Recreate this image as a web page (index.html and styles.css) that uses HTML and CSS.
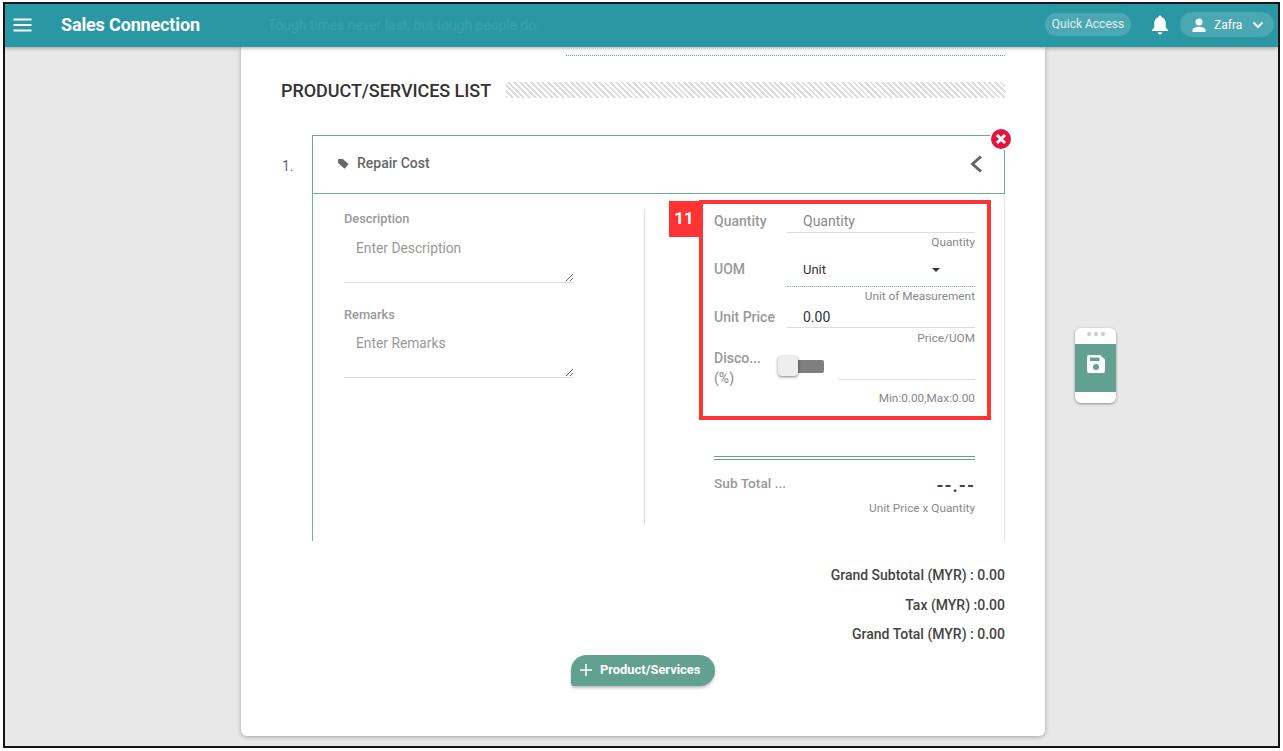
FILE: index.html
```html
<!DOCTYPE html>
<html lang="en">
<head>
  <meta charset="UTF-8">
  <title>Sales Connection</title>
  <link rel="stylesheet" href="styles.css">
</head>
<body>
  <div class="frame">
    <header class="topbar">
      <svg class="menu-icon" width="20" height="14" viewBox="0 0 20 14"><path d="M0.5 1.5h18M0.5 7h18M0.5 12.5h18" stroke="#fff" stroke-width="2"/></svg>
      <div class="brand">Sales Connection</div>
      <div class="quote">Tough times never last, but tough people do.</div>
      <div class="quick">Quick Access</div>
      <svg class="bell" width="18" height="20" viewBox="0 0 18 20"><path d="M9 0.5c-1 0-1.6.7-1.6 1.7C4.7 3 3.3 5.2 3.3 8v4.5L1 15v1h16v-1l-2.3-2.5V8c0-2.8-1.4-5-4.1-5.8C10.6 1.2 10 .5 9 .5zM6.8 17.3c0 1.2 1 2.2 2.2 2.2s2.2-1 2.2-2.2z" fill="#fff"/></svg>
      <div class="user">
        <svg width="16" height="14" viewBox="0 0 16 14"><circle cx="8" cy="4" r="3.5" fill="#fff"/><path d="M1.5 14v-2c0-2.2 4.3-3.3 6.5-3.3s6.5 1.1 6.5 3.3v2z" fill="#fff"/></svg>
        <span>Zafra</span>
        <svg width="12" height="8" viewBox="0 0 12 8"><path d="M1.5 1.5 6 6l4.5-4.5" fill="none" stroke="#fff" stroke-width="2"/></svg>
      </div>
    </header>

    <div class="content">
      <main class="card">
        <div class="top-rule"></div>
        <div class="section-title">
          <h2>PRODUCT/SERVICES LIST</h2>
          <div class="stripes"></div>
        </div>

        <div class="item">
          <div class="item-no">1.</div>
          <div class="item-main">
            <div class="item-head">
              <svg class="tag" width="11" height="10" viewBox="0 0 11 10"><path d="M0 1.2C0 .5.5 0 1.2 0h3.6l5.8 5-3.9 4.8L.3 4.3z" fill="#666"/></svg>
              <span class="item-name">Repair Cost</span>
              <svg class="chevron" width="14" height="18" viewBox="0 0 14 18"><path d="M12 1.5 3.5 9l8.5 7.5" fill="none" stroke="#666" stroke-width="3"/></svg>
              <svg class="remove" width="24" height="24" viewBox="0 0 24 24"><circle cx="12" cy="12" r="11.5" fill="#fff"/><circle cx="12" cy="12" r="10" fill="#e0163f"/><path d="M8 8l8 8M16 8l-8 8" stroke="#fff" stroke-width="3"/></svg>
            </div>
            <div class="item-body">
              <div class="col-left">
                <label class="area-label">Description</label>
                <textarea class="area" placeholder="Enter Description"></textarea>
                <label class="area-label second">Remarks</label>
                <textarea class="area area-second" placeholder="Enter Remarks"></textarea>
              </div>
              <div class="col-right">
                <div class="annot"><span class="annot-no">11</span></div>

                <div class="field qty">
                  <label>Quantity</label>
                  <input class="line-input" placeholder="Quantity">
                </div>
                <div class="hint">Quantity</div>

                <div class="field uom">
                  <label>UOM</label>
                  <div class="select"><span>Unit</span><i class="caret"></i></div>
                </div>
                <div class="hint">Unit of Measurement</div>

                <div class="field price">
                  <label>Unit Price</label>
                  <input class="line-input" value="0.00">
                </div>
                <div class="hint hint-price">Price/UOM</div>

                <div class="discount">
                  <label>Disco...<br>(%)</label>
                  <div class="toggle"><i class="knob"></i></div>
                  <div class="discount-line"></div>
                </div>
                <div class="hint">Min:0.00,Max:0.00</div>

                <div class="double-line"></div>
                <div class="subtotal">
                  <label>Sub Total ...</label>
                  <b>--.--</b>
                </div>
                <div class="hint hint-sub">Unit Price x Quantity</div>
              </div>
            </div>
          </div>
        </div>

        <div class="summary">
          <div>Grand Subtotal (MYR) : 0.00</div>
          <div>Tax (MYR) :0.00</div>
          <div>Grand Total (MYR) : 0.00</div>
        </div>

        <div class="add-wrap">
          <button class="add-btn">
            <svg width="12" height="12" viewBox="0 0 12 12"><path d="M6 0v12M0 6h12" stroke="#fff" stroke-width="1.5"/></svg>
            Product/Services
          </button>
        </div>
      </main>
    </div>

    <div class="save-widget">
      <div class="dots"><i></i><i></i><i></i></div>
      <div class="save-band">
        <svg width="18" height="18" viewBox="0 0 18 18"><path d="M2 0h11l5 4.5V16a2 2 0 0 1-2 2H2a2 2 0 0 1-2-2V2a2 2 0 0 1 2-2z" fill="#fff"/><rect x="3" y="2.5" width="9.5" height="3.5" fill="#62a18f"/><circle cx="9" cy="12" r="3" fill="#62a18f"/></svg>
      </div>
    </div>
  </div>
</body>
</html>
```

FILE: styles.css
```css
/* General Page Styling */
* {
  box-sizing: border-box;
}
body {
  margin: 0;
  background: #fff;
  font-family: 'Roboto', sans-serif;
  color: #333;
}
.frame {
  position: relative;
  width: 1277px;
  height: 746px;
  margin: 2px 0 0 3px;
  border: 2px solid #141414;
  background: #e8e8e8;
  overflow: hidden;
  display: flex;
  flex-direction: column;
}

/* Top Bar */
.topbar {
  position: relative;
  z-index: 2;
  flex: none;
  height: 43px;
  padding-right: 4px;
  background: #2a98a4;
  box-shadow: 0 1px 4px rgba(0, 0, 0, 0.35);
  display: flex;
  align-items: center;
  color: #fff;
}
.menu-icon {
  margin: 0 0 2px 8px;
}
.brand {
  margin-left: 28px;
  padding-bottom: 2px;
  font-size: 18px;
  font-weight: 700;
  letter-spacing: -0.15px;
}
.quote {
  margin-left: 68px;
  padding-bottom: 2px;
  font-size: 13.85px;
  color: #3a9fb0;
  flex: 1;
}
.quick {
  width: 86px;
  height: 23px;
  margin-bottom: 2px;
  border-radius: 12px;
  background: #4aa8b2;
  color: #e2f3f4;
  font-size: 12px;
  line-height: 23px;
  text-align: center;
}
.bell {
  margin: 0 0 2px 20px;
}
.user {
  width: 94px;
  height: 25px;
  margin: 0 0 2px 11px;
  border-radius: 13px;
  background: #4aa8b2;
  display: flex;
  align-items: center;
  padding-left: 11px;
  font-size: 12px;
}
.user span {
  margin: 0 8px 0 7px;
  width: 30px;
}

/* Card */
.content {
  flex: 1;
  min-height: 0;
  padding: 0 0 9px 236px;
}
.card {
  width: 804px;
  height: 689px;
  padding: 8px 40px 0;
  background: #fff;
  border-radius: 0 0 6px 6px;
  box-shadow: 0 1px 4px rgba(0, 0, 0, 0.3);
}
.top-rule {
  margin-left: 285px;
  border-top: 1px dotted #6aa898;
}
.section-title {
  display: flex;
  align-items: center;
  margin-top: 23px;
  height: 22px;
}
.section-title h2 {
  margin: 0;
  font-size: 18px;
  font-weight: 500;
  letter-spacing: -0.05px;
  color: #333;
}
.stripes {
  flex: 1;
  height: 16px;
  margin-left: 15px;
  background: repeating-linear-gradient(45deg, #ddd 0, #ddd 2px, #fff 2px, #fff 4px);
}

/* Item */
.item {
  display: flex;
  margin-top: 34px;
}
.item-no {
  width: 31px;
  padding: 23px 0 0 1px;
  font-size: 14px;
  color: #666;
}
.item-main {
  width: 693px;
}
.item-head {
  position: relative;
  height: 59px;
  border: 1px solid #6aa898;
  display: flex;
  align-items: center;
  padding: 0 0 2px 25px;
}
.item-name {
  margin: 0 0 2px 8px;
  flex: 1;
  font-size: 14px;
  font-weight: 500;
  color: #666;
}
.chevron {
  margin-right: 21px;
}
.remove {
  position: absolute;
  top: -9px;
  right: -9px;
}
.item-body {
  height: 347px;
  border-left: 1px solid #6db3a0;
  border-right: 1px solid #e6e6e6;
  padding: 15px 0 0 31px;
  display: flex;
  align-items: flex-start;
}
.col-left {
  width: 301px;
  height: 316px;
  padding-top: 1px;
  border-right: 1px solid #ddd;
}
.area-label {
  display: block;
  font-size: 12.8px;
  font-weight: 500;
  color: #999;
  line-height: 18px;
}
.area-label.second {
  margin-top: 23px;
}
.area {
  display: block;
  width: 230px;
  height: 53px;
  margin-top: 2px;
  padding: 8px 12px;
  border: 0;
  border-bottom: 1px solid #ddd;
  outline: 0;
  font-family: 'Roboto', sans-serif;
  font-size: 13.8px;
  line-height: 20px;
  color: #333;
}
.area-second {
  height: 52px;
  padding-top: 7px;
}
.area::placeholder {
  color: #999;
  opacity: 1;
}
.line-input::placeholder {
  color: #888;
  opacity: 1;
}

/* Right Column */
.col-right {
  position: relative;
  width: 261px;
  margin-left: 69px;
}
.annot {
  position: absolute;
  left: -15px;
  top: -9px;
  width: 292px;
  height: 220px;
  border: 4px solid #ff3333;
  pointer-events: none;
}
.annot-no {
  position: absolute;
  left: -34px;
  top: -3px;
  width: 30px;
  height: 36px;
  background: #ff3333;
  color: #fff;
  font-size: 17px;
  font-weight: 700;
  line-height: 34px;
  text-align: center;
}
.field {
  display: flex;
}
.field label,
.discount label,
.subtotal label {
  font-size: 14px;
  font-weight: 500;
  color: #999;
}
.field label {
  flex: none;
  width: 73px;
  line-height: 24px;
}
.line-input {
  flex: 1;
  min-width: 0;
  height: 24px;
  padding: 0 0 0 16px;
  border: 0;
  border-bottom: 1px solid #ddd;
  outline: 0;
  font-family: 'Roboto', sans-serif;
  font-size: 14px;
  color: #333;
  background: transparent;
}
.hint {
  margin-top: 2px;
  height: 14px;
  font-size: 11.8px;
  line-height: 14px;
  color: #888;
  text-align: right;
}
.uom {
  margin-top: 8px;
}
.select {
  flex: 1;
  height: 30px;
  padding: 0 35px 0 16px;
  border-bottom: 1px dotted #6fb5a0;
  display: flex;
  justify-content: space-between;
  font-size: 13px;
  line-height: 25px;
  color: #333;
}
.caret {
  width: 0;
  height: 0;
  margin-top: 11px;
  border: 4px solid transparent;
  border-top-color: #333;
  border-bottom: 0;
}
.price {
  margin-top: 2px;
}
.price .line-input {
  height: 23px;
  padding-top: 2px;
}
.hint-price {
  margin-top: 2px;
}
.discount {
  display: flex;
  height: 40px;
  margin-top: 3px;
}
.discount label {
  flex: none;
  width: 64px;
  line-height: 20px;
}
.toggle {
  position: relative;
  width: 46px;
  height: 13px;
  margin-top: 12px;
  margin-right: 14px;
  padding-left: 7px;
  background: #7f7f7f content-box;
  border-radius: 2px;
}
.knob {
  position: absolute;
  left: 0;
  top: -4px;
  width: 20px;
  height: 20px;
  background: #eee;
  border-radius: 4px;
  box-shadow: 0 1px 3px rgba(0, 0, 0, 0.5);
}
.discount-line {
  flex: 1;
  height: 32px;
  border-bottom: 1px solid #ddd;
}
.discount + .hint {
  margin-top: 3px;
}
.double-line {
  height: 4px;
  margin-top: 51px;
  border-top: 1px solid #62a18f;
  border-bottom: 1px solid #62a18f;
}
.subtotal {
  display: flex;
  justify-content: space-between;
  margin-top: 14px;
  height: 24px;
  line-height: 18px;
}
.subtotal label {
  font-size: 13.7px;
}
.subtotal b {
  font-size: 18px;
  font-weight: 700;
  letter-spacing: 1px;
  color: #444;
  line-height: 24px;
}
.hint-sub {
  margin-top: 3px;
}

/* Totals */
.summary {
  margin-top: 20px;
  font-size: 14px;
  font-weight: 500;
  line-height: 29.5px;
  color: #444;
  text-align: right;
}
.add-wrap {
  display: flex;
  justify-content: center;
  margin-top: 5px;
}
.add-btn {
  width: 144px;
  height: 31px;
  padding: 0 0 1px 9px;
  border: 0;
  border-radius: 16px 16px 16px 4px;
  background: #62a18f;
  box-shadow: 0 2px 3px rgba(0, 0, 0, 0.25);
  color: #fff;
  font-family: 'Roboto', sans-serif;
  font-size: 12.9px;
  font-weight: 700;
  display: flex;
  align-items: center;
  gap: 8px;
}

/* Floating Save */
.save-widget {
  position: absolute;
  left: 1070px;
  top: 324px;
  width: 41px;
  height: 75px;
  padding-top: 16px;
  background: #fff;
  border-radius: 6px;
  box-shadow: 0 1px 3px rgba(0, 0, 0, 0.4);
}
.dots {
  position: absolute;
  top: 4px;
  left: 12px;
  display: flex;
  gap: 3px;
}
.dots i {
  width: 4px;
  height: 4px;
  border-radius: 50%;
  background: #ccc;
}
.save-band {
  height: 48px;
  padding-bottom: 8px;
  background: #62a18f;
  display: flex;
  align-items: center;
  justify-content: center;
}
```
